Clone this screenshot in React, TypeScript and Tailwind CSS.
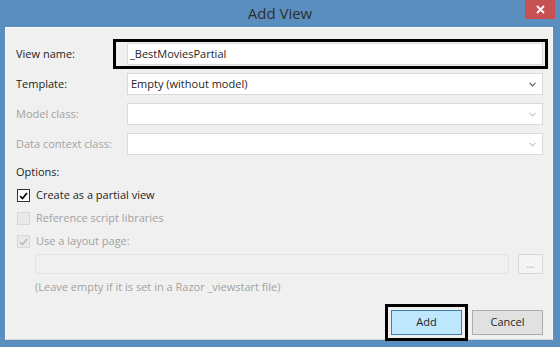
import React from "react";

const font = { fontFamily: '"Open Sans", "Noto Sans", sans-serif' };

function Chevron({ disabled }: { disabled?: boolean }) {
  return (
    <svg width="7" height="5" viewBox="0 0 7 5" className="shrink-0">
      <path d="M0.5 0.8 L3.5 3.8 L6.5 0.8" fill="none" stroke={disabled ? "#c8c8c8" : "#5a5a5a"} strokeWidth="1.2" />
    </svg>
  );
}

function Combo({ text, disabled }: { text?: string; disabled?: boolean }) {
  return (
    <div className="flex h-[22px] w-[416px] shrink-0 items-center justify-between border border-[#d9d9d9] bg-white pl-[3px] pr-[6px]">
      <span className="text-[11px] text-[#1e1e1e]">{text}</span>
      <Chevron disabled={disabled} />
    </div>
  );
}

function Row({ label, disabled, children }: { label: string; disabled?: boolean; children: React.ReactNode }) {
  return (
    <div className="flex items-center">
      <div className={`w-[111px] shrink-0 text-[11px] ${disabled ? "text-[#a2a2a2]" : "text-[#1e1e1e]"}`}>{label}</div>
      {children}
    </div>
  );
}

export default function App() {
  return (
    <div className="flex h-[347px] w-[560px] flex-col bg-[#5a8ebf]" style={font}>
      <div className="relative flex h-[27px] items-center justify-center">
        <span className="text-[15px] text-[#2e2e2e]">Add View</span>
        <div className="absolute right-[5px] top-0 flex h-[19px] w-[30px] items-center justify-center bg-[#c75050]">
          <svg width="9" height="9" viewBox="0 0 9 9">
            <path d="M1 1 L8 8 M8 1 L1 8" stroke="white" strokeWidth="1.8" />
          </svg>
        </div>
      </div>
      <div className="ml-[5px] flex h-[313px] w-[548px] flex-col border border-[#fafafa] border-b-[#d6d6d6] bg-[#f0f0f0] pl-[10px] pr-[9px] pt-[11px]">
        {/* View name */}
        <div className="flex items-center">
          <div className="w-[97px] shrink-0 text-[11px] text-[#1e1e1e]">View name:</div>
          <div className="-mr-[5px] flex h-[30px] w-[435px] shrink-0 items-center border-[3px] border-black pl-[11px] pr-[2px]">
            <div className="flex h-[22px] w-[416px] shrink-0 items-center border border-[#d9d9d9] bg-white pl-[2px]">
              <span className="text-[11px] text-[#1e1e1e]">_BestMoviesPartial</span>
            </div>
          </div>
        </div>
        <div className="mt-[4px] flex flex-col gap-[8px]">
          <Row label="Template:">
            <Combo text="Empty (without model)" />
          </Row>
          <Row label="Model class:" disabled>
            <Combo disabled />
          </Row>
          <Row label="Data context class:" disabled>
            <Combo disabled />
          </Row>
        </div>
        <div className="mt-[9px] h-[16px] text-[11px] leading-[16px] text-[#1e1e1e]">Options:</div>
        <div className="mt-[4px] flex flex-col">
          <div className="flex h-[23px] items-center pl-[1px]">
            <div className="flex h-[13px] w-[13px] items-center justify-center border border-[#333] bg-white">
              <svg width="9" height="8" viewBox="0 0 9 8">
                <path d="M1 4 L3.5 6.5 L8 1" fill="none" stroke="#000" strokeWidth="1.6" />
              </svg>
            </div>
            <span className="ml-[6px] text-[11px] text-[#1e1e1e]">Create as a partial view</span>
          </div>
          <div className="flex h-[23px] items-center pl-[1px]">
            <div className="h-[13px] w-[13px] border border-[#d8d8d8] bg-[#e9e9e9]" />
            <span className="ml-[6px] text-[11px] text-[#a2a2a2]">Reference script libraries</span>
          </div>
          <div className="flex h-[23px] items-center pl-[1px]">
            <div className="flex h-[13px] w-[13px] items-center justify-center border border-[#d8d8d8] bg-[#e9e9e9]">
              <svg width="9" height="8" viewBox="0 0 9 8">
                <path d="M1 4 L3.5 6.5 L8 1" fill="none" stroke="#b4b4b4" strokeWidth="1.4" />
              </svg>
            </div>
            <span className="ml-[6px] text-[11px] text-[#a2a2a2]">Use a layout page:</span>
          </div>
        </div>
        <div className="mt-[1px] flex items-center pl-[19px]">
          <div className="h-[20px] w-[474px] shrink-0 border border-[#e3e3e3] bg-[#f0f0f0]" />
          <div className="ml-[9px] flex h-[20px] w-[25px] shrink-0 items-center justify-center border border-[#d9d9d9] bg-[#f4f4f4] text-[10px] text-[#a2a2a2]">
            ...
          </div>
        </div>
        <div className="mt-[5px] h-[16px] pl-[19px] text-[11px] leading-[16px] text-[#a2a2a2]">
          (Leave empty if it is set in a Razor _viewstart file)
        </div>
        <div className="mt-[9px] flex items-start justify-end">
          <div className="border-[3px] border-black p-[3px]">
            <div className="flex h-[25px] w-[71px] items-center justify-center border border-[#3c7fb1] bg-[#bee6fd] text-[11px] text-[#1e1e1e]">
              Add
            </div>
          </div>
          <div className="ml-[4px] mt-[6px] flex h-[25px] w-[71px] items-center justify-center border border-[#adadad] bg-[#e1e1e1] text-[11px] text-[#1e1e1e]">
            Cancel
          </div>
        </div>
      </div>
    </div>
  );
}
